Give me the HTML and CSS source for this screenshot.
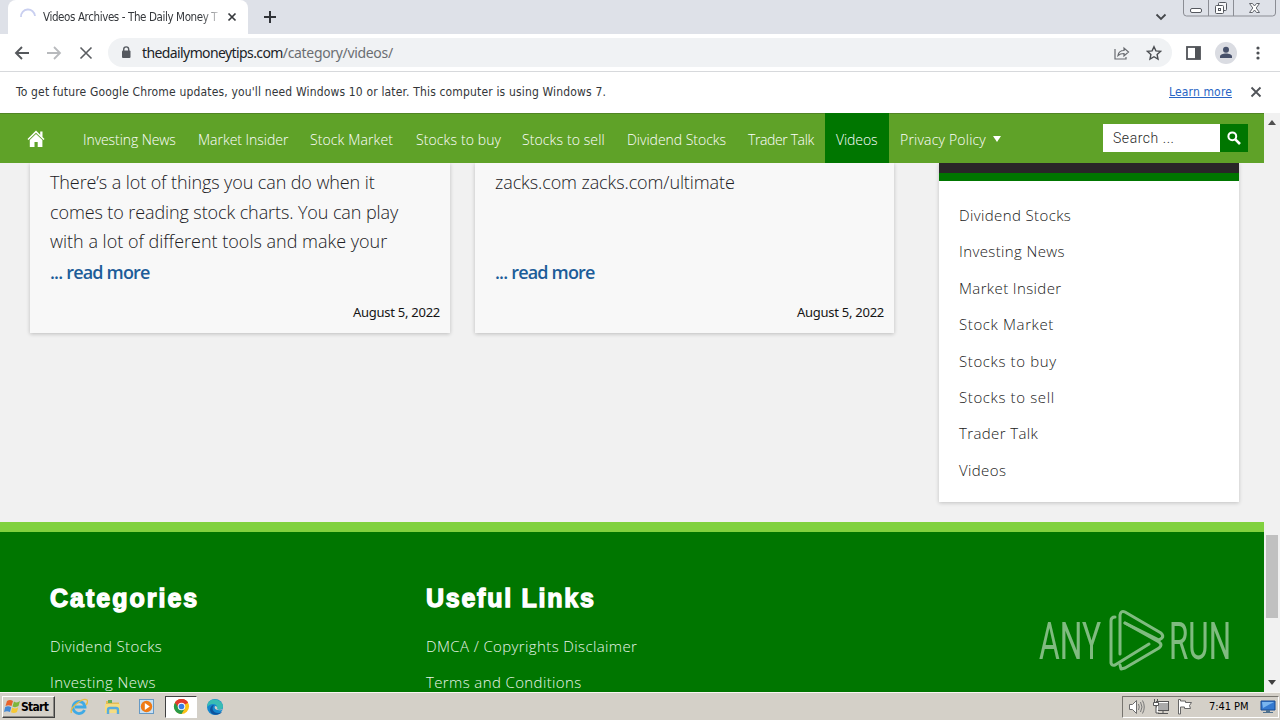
FILE: index.html
```html
<!DOCTYPE html>
<html lang="en">
<head>
<meta charset="utf-8">
<title>Videos Archives - The Daily Money Tips</title>
<link rel="stylesheet" href="styles.css">
</head>
<body>
<div class="screen">
  <header class="tabstrip">
    <div class="tab">
      <svg class="spinner" width="18" height="18" viewBox="0 0 18 18"><path d="M2 9a7 7 0 0 1 14-1" fill="none" stroke="#c9cff0" stroke-width="1.800"/></svg>
      <span class="tab-title">Videos Archives - The Daily Money T</span>
      <svg class="tab-close" width="10" height="10" viewBox="0 0 10 10"><path d="M1.500 1.500l7 7M8.500 1.500l-7 7" stroke="#36393d" stroke-width="1.700"/></svg>
    </div>
    <svg class="new-tab" width="12" height="12" viewBox="0 0 12 12"><path d="M6 0v12M0 6h12" stroke="#303338" stroke-width="2"/></svg>
    <svg class="tab-search" width="12" height="8" viewBox="0 0 12 8"><path d="M1.500 1.500L6 6l4.500-4.500" fill="none" stroke="#44474b" stroke-width="1.800"/></svg>
    <svg class="window-buttons" width="94" height="18" viewBox="0 0 94 18">
      <path d="M.5 0v13q0 3 3 3h86q3 0 3-3V0M25.500 0v16M50.500 0v16" fill="none" stroke="#8b8d94"/>
      <rect x="7.500" y="8.500" width="11" height="4" rx="1.500" fill="#fff" stroke="#55585f"/>
      <rect x="35.500" y="2.500" width="8" height="8" rx="1" fill="#f5f5f7" stroke="#55585f"/>
      <rect x="32.500" y="5.500" width="8" height="8" rx="1" fill="#fff" stroke="#55585f"/><rect x="35.500" y="8.500" width="2" height="2" fill="none" stroke="#55585f"/>
      <path d="M66.500 3.500h3l2 2.500 2-2.500h3l-3.300 4.500 3.300 4.500h-3l-2-2.500-2 2.500h-3l3.300-4.500z" fill="#fff" stroke="#62656c"/>
    </svg>
  </header>

  <div class="toolbar">
    <svg class="tool-icon" width="16" height="14" viewBox="0 0 16 14"><path d="M15 7H2M8 1L2 7l6 6" fill="none" stroke="#55585c" stroke-width="1.900"/></svg>
    <svg class="tool-icon" width="16" height="14" viewBox="0 0 16 14"><path d="M1 7h13M8 1l6 6-6 6" fill="none" stroke="#b8babd" stroke-width="1.800"/></svg>
    <svg class="tool-icon" width="16" height="14" viewBox="0 0 16 14"><path d="M2.500 1.500l11 11M13.500 1.500l-11 11" stroke="#5a5d61" stroke-width="1.600"/></svg>
    <div class="omnibox">
      <svg width="10" height="13" viewBox="0 0 10 13"><rect x="1" y="4.500" width="8.500" height="7.500" rx="1" fill="#55595f"/><path d="M2.700 5V3.400a2.500 2.500 0 0 1 5 0V5" fill="none" stroke="#55595f" stroke-width="1.400"/></svg>
      <span class="url"><span class="host">thedailymoneytips.com</span><span class="path">/category/videos/</span></span>
      <svg class="share" width="16" height="14" viewBox="0 0 16 14"><path d="M1 3v10h11v-2M4 9.500C4.500 6 7 4.500 10 4.500V2l4.500 4L10 10V7.500C7.500 7.500 5.500 8 4 9.500z" fill="none" stroke="#686b70" stroke-width="1.200"/></svg>
      <svg class="star" width="16" height="16" viewBox="0 0 16 16"><path d="M8 1.700l1.900 4.200 4.600.5-3.400 3.100.9 4.500-4-2.300L4 14l.9-4.500-3.400-3.100 4.600-.5z" fill="none" stroke="#4b4e52" stroke-width="1.400"/></svg>
    </div>
    <svg class="panel-icon" width="15" height="14" viewBox="0 0 15 14"><rect x="1" y="1" width="13" height="12" fill="none" stroke="#505358" stroke-width="1.800"/><path d="M9 1h5v12H9z" fill="#505358"/></svg>
    <svg class="avatar" width="22" height="22" viewBox="0 0 22 22"><circle cx="11" cy="11" r="11" fill="#dadce2"/><circle cx="11" cy="7.800" r="3" fill="#46506a"/><path d="M5 16v-1.500c0-4 12-4 12 0V16z" fill="#46506a"/></svg>
    <svg class="dots" width="4" height="14" viewBox="0 0 4 14"><g fill="#4d5054"><circle cx="2" cy="2" r="1.600"/><circle cx="2" cy="7" r="1.600"/><circle cx="2" cy="12" r="1.600"/></g></svg>
  </div>

  <div class="infobar">
    <span class="info-text">To get future Google Chrome updates, you'll need Windows 10 or later. This computer is using Windows 7.</span>
    <a class="info-link">Learn more</a>
    <svg width="12" height="12" viewBox="0 0 12 12"><path d="M1.500 1.500l9 9M10.500 1.500l-9 9" stroke="#505358" stroke-width="1.800"/></svg>
  </div>

  <div class="viewport">
    <div class="page">
      <nav class="nav">
        <a class="home"><svg width="18" height="18" viewBox="0 0 18 18"><path d="M9 .5L.5 9l1 1L9 2.700l7.500 7.300 1-1L15.500 7V1.500h-2.300v3.200z" fill="#fff"/><path d="M9 4L2.800 10v7H7.500v-5h3.200v5h4.700v-7z" fill="#fff"/></svg></a>
        <a>Investing News</a><a class="wide">Market Insider</a><a class="wider">Stock Market</a><a class="wider">Stocks to buy</a><a class="wider">Stocks to sell</a><a class="wide">Dividend Stocks</a><a class="tight">Trader Talk</a><a class="active">Videos</a>
        <a class="privacy">Privacy Policy <svg width="8" height="6" viewBox="0 0 8 6"><path d="M0 0h8L4 6z" fill="#fff"/></svg></a>
        <div class="search"><span class="field">Search ...</span><span class="search-button"><svg width="14" height="14" viewBox="0 0 14 14"><circle cx="5.300" cy="5.300" r="3.900" fill="none" stroke="#fff" stroke-width="2"/><path d="M8.300 8.300l4.700 4.700" stroke="#fff" stroke-width="2.600"/></svg></span></div>
      </nav>
      <main class="content">
        <article class="card">
          <p class="excerpt">There’s a lot of things you can do when it<br>comes to reading stock charts. You can play<br><span class="loose">with a lot of different tools and make your</span></p>
          <a class="more">... read more</a>
          <time class="date">August 5, 2022</time>
        </article>
        <article class="card">
          <p class="excerpt">zacks.com zacks.com/ultimate</p>
          <a class="more">... read more</a>
          <time class="date">August 5, 2022</time>
        </article>
        <aside class="sidebar">
          <ul class="links">
            <li>Dividend Stocks</li><li>Investing News</li><li>Market Insider</li><li class="spaced">Stock Market</li><li class="spaced">Stocks to buy</li><li class="spaced">Stocks to sell</li><li>Trader Talk</li><li>Videos</li>
          </ul>
        </aside>
      </main>
      <footer class="footer">
        <section><h2>Categories</h2><ul class="links"><li>Dividend Stocks</li><li>Investing News</li></ul></section>
        <section><h2 class="useful">Useful Links</h2><ul class="links"><li>DMCA / Copyrights Disclaimer</li><li>Terms and Conditions</li></ul></section>
      </footer>
    </div>
    <div class="scrollbar">
      <svg width="8" height="5" viewBox="0 0 8 5"><path d="M0 5l4-5 4 5z" fill="#505050"/></svg>
      <div class="thumb"></div>
      <svg class="down" width="8" height="5" viewBox="0 0 8 5"><path d="M0 0l4 5 4-5z" fill="#404040"/></svg>
    </div>
    <svg class="watermark" width="210" height="70" viewBox="0 0 210 70">
      <g fill="#fff" class="wm-text"><text x="1" y="51" textLength="62" lengthAdjust="spacingAndGlyphs">ANY</text><text x="131" y="51" textLength="62" lengthAdjust="spacingAndGlyphs">RUN</text></g>
      <g fill="none" stroke="#fff" stroke-width="3" stroke-linejoin="round" stroke-linecap="round">
        <path d="M82 46V7q1-5 5-3l36 21q3 3 1 5l-3 2L87 15"/>
        <path d="M77 9q-4 0-4 4v42q1 3 4 2l34-21"/>
        <path d="M82 57l1 4 4-1 34-20q4-3 0-6L87 15"/>
      </g>
    </svg>
  </div>

  <div class="taskbar">
    <div class="start"><svg width="17" height="16" viewBox="0 0 17 16"><path d="M3 2q3-2 6 0L7.500 7q-3-1.500-6 0z" fill="#e8622b"/><path d="M10 2.500q3 2 6-.500L14.500 7q-3 2-6 .5z" fill="#7eb63c"/><path d="M1.200 8q3-1.500 6 .2L6 13q-3-1.500-6 0z" fill="#4389d5"/><path d="M8.200 8.500q3 2 6-.3L13 13q-3 2-6 .3z" fill="#f6c834"/></svg><span>Start</span></div>
    <div class="launchers">
      <span><svg width="18" height="18" viewBox="0 0 18 18"><path d="M14.500 12A6 6 0 1 1 15 9H5" fill="none" stroke="#3faae5" stroke-width="2.800"/><path d="M1.500 15C-1 10 13-1 17 2c1 1 .5 3-1 5" fill="none" stroke="#e8bc46" stroke-width="1.400"/></svg></span>
      <span><svg width="18" height="18" viewBox="0 0 18 18"><path d="M2 3h5l1 1.500h7V15H2z" fill="#e4bd54"/><path d="M4 2h4v3H4z" fill="#65ae57"/><path d="M1 6h15v9H1z" fill="#f5dc82"/><path d="M4 16v-4q0-2 2-2h6q2 0 2 2v4" fill="none" stroke="#58acdd" stroke-width="2.400"/></svg></span>
      <span><svg width="18" height="18" viewBox="0 0 18 18"><rect x="1.500" y="1.500" width="14" height="14" fill="#c8e1f5" stroke="#6699c4"/><circle cx="8.500" cy="8.500" r="5.700" fill="#ef7b16"/><path d="M6.800 5v7l5-3.500z" fill="#fff"/></svg></span>
      <span class="pressed"><svg width="17" height="17" viewBox="0 0 18 18"><circle cx="9" cy="9" r="8" fill="#fbc116"/><path d="M9 9L2.070 5A8 8 0 0 1 15.930 5z" fill="#e33b2e"/><path d="M9 9L2.070 5A8 8 0 0 0 9 17l3.500-6z" fill="#299a48"/><path d="M9 5h6.930A8 8 0 0 0 2.070 5L6 10z" fill="#e33b2e"/><circle cx="9" cy="9" r="4" fill="#fff"/><circle cx="9" cy="9" r="3" fill="#397de4"/></svg></span>
      <span><svg width="18" height="18" viewBox="0 0 18 18"><circle cx="9" cy="9" r="8" fill="#1587ce"/><path d="M2 5c3-6 14-4 15 3 0 4-4 4-6 3 1-3-1-5-4-5-2 0-4 1-6 3z" fill="#38bcb4"/><path d="M8 7c-3 3-1 8 4 8 2 0 3-.5 4-1-3 4-11 4-12-2 0-3 2-5 4-5z" fill="#0e539d"/><path d="M9 8c-1 2 0 5 7 4l1-1c-2 1-5 1-6 0 1-1 0-3-2-3z" fill="#d4d0c8"/></svg></span>
    </div>
    <div class="tray">
      <svg width="18" height="18" viewBox="0 0 18 18"><path d="M1.500 6.500h3l4-4v13l-4-4h-3z" fill="#fff" stroke="#6d6d6d"/><path d="M10.500 6q1.500 3 0 6M12.500 4q3 5 0 10M14.500 2.500q3.500 6.500 0 13" fill="none" stroke="#777"/></svg>
      <svg width="18" height="18" viewBox="0 0 18 18"><rect x="5.500" y="4.500" width="11" height="8" fill="#aaa" stroke="#fff"/><rect x="4.500" y="3.500" width="12" height="9" fill="none" stroke="#555"/><path d="M6 15.500h10M11 13v2" stroke="#555"/><path d="M2.500 1v3M5.500 1v3M1.500 4.500h5v3h-5zM4 8v7h3" fill="#fff" stroke="#555"/></svg>
      <svg width="18" height="18" viewBox="0 0 18 18"><path d="M2.500 16V1.500h2V3h5v1.500h6l-2 3 1 3h-6V9h-4v7z" fill="#fff" stroke="#666"/></svg>
      <span class="clock">7:41 PM</span>
      <svg class="desktop" width="18" height="16" viewBox="0 0 18 16"><path d="M2 2h14v9H2z" fill="#3479d0" stroke="#174a91"/><path d="M3 3h12L4 9z" fill="#79b5ef"/><path d="M7 11h4v2h3v1H4v-1h3z" fill="#4f718f"/></svg>
    </div>
  </div>
</div>
</body>
</html>
```
FILE: styles.css
```css
* { box-sizing: border-box; }
body { margin: 0; background: #fff; font-family: "Open Sans", "Noto Sans", sans-serif; }
svg { display: block; flex: none; }
ul, h2, p { margin: 0; padding: 0; list-style: none; }
.screen { width: 1280px; height: 720px; display: flex; flex-direction: column; overflow: hidden; white-space: nowrap; }

.tabstrip { height: 34px; flex: none; display: flex; background: #dee1e8; padding-left: 8px; }
.tab { width: 240px; background: #fff; border-radius: 8px 8px 0 0; display: flex; align-items: center; padding: 0 11px; }
.tab-title { width: 176px; margin-left: 6px; font: 11.500px/18px "DejaVu Sans Condensed", sans-serif; letter-spacing: -0.390px; color: #34373b; mask-image: linear-gradient(90deg, #000 90%, rgba(0,0,0,.2)); }
.tab-close { margin-left: 8px; }
.new-tab { margin: 11px 0 0 16px; }
.tab-search { margin: 13px 16px 0 auto; }
.window-buttons { margin-right: 3px; }

.toolbar { height: 38px; flex: none; display: flex; align-items: center; background: #fff; border-bottom: 1px solid #d7d9dc; padding-left: 14px; }
.tool-icon { margin-right: 16px; }
.omnibox { width: 1064px; height: 29px; margin-left: -2px; border-radius: 15px; background: #f0f2f4; display: flex; align-items: center; padding: 0 10px 0 13px; }
.url { margin-left: 11px; font: 14px/20px "Noto Sans", sans-serif; }
.host { color: #202327; letter-spacing: -0.600px; }
.path { color: #6b6e72; letter-spacing: -0.330px; }
.share { margin-left: auto; margin-right: 16px; }
.panel-icon { margin-left: 14px; }
.avatar { margin-left: 14px; }
.dots { margin-left: 19px; }

.infobar { height: 41px; flex: none; display: flex; align-items: center; padding: 0 18px 2px 16px; font: 12px/18px "DejaVu Sans Condensed", sans-serif; color: #333639; }
.info-text { letter-spacing: .160px; }
.info-link { margin-left: auto; margin-right: 18px; color: #2865c5; text-decoration: underline; letter-spacing: .150px; }

.viewport { position: relative; height: 579px; flex: none; display: flex; overflow: hidden; }
.page { width: 1264px; background: #f1f1f1; display: flex; flex-direction: column; }
.nav { height: 50px; flex: none; background: #5fa228; border-top: 1px solid #518525; color: #fff; display: grid; grid-template-columns: 72px 115px 112px 106px 106px 105px 121px 88px 64px 1fr 161px; font-size: 14px; font-weight: 300; letter-spacing: -0.080px; }
.nav > a { display: flex; align-items: center; padding: 1px 0 0 11px; }
.nav > a.home { padding-left: 27px; }
.nav > a.active { background: #007600; margin-top: -1px; padding-top: 2px; }
.nav > .wide { letter-spacing: -0.020px; }
.nav > .wider { letter-spacing: .110px; }
.nav > .tight { letter-spacing: -0.380px; }
.nav > .privacy { letter-spacing: .200px; }
.privacy svg { margin-left: 7px; }
.search { width: 145px; height: 28px; margin-top: 10px; display: flex; }
.field { flex: 1; background: #fff; color: #292929; padding-left: 10px; font: 300 14px/28px Roboto, sans-serif; letter-spacing: .550px; }
.search-button { width: 28px; background: #007600; display: flex; align-items: center; justify-content: center; }

.content { height: 359px; flex: none; display: grid; grid-template-columns: 420px 419px 300px; column-gap: 25px; align-items: start; padding-left: 30px; }
.card { height: 170px; background: #f8f8f8; box-shadow: 0 1px 4px rgba(0,0,0,.22); clip-path: inset(0 -8px -8px -8px); padding: 5px 10px 0 20px; display: flex; flex-direction: column; }
.excerpt { height: 90px; font-size: 18px; line-height: 29.500px; font-weight: 300; color: #202024; letter-spacing: -0.100px; }
.loose { letter-spacing: 0; }
.more { font: 600 18px/29px "Open Sans", sans-serif; color: #1d5d99; letter-spacing: -0.820px; }
.date { margin-top: 14px; text-align: right; font: 13px/22px "Noto Sans", sans-serif; color: #151515; letter-spacing: -0.270px; }
.sidebar { width: 300px; height: 339px; margin-left: 20px; background: #fff; border-top: 10px solid #292728; box-shadow: 0 1px 4px rgba(0,0,0,.2); clip-path: inset(0 -8px -8px -8px); }
.sidebar .links { border-top: 8px solid #007600; padding: 16px 20px 0; }
.links { font-size: 15px; line-height: 36.400px; font-weight: 300; color: #202020; letter-spacing: .380px; }
.links .spaced { letter-spacing: .620px; }

.footer { flex: 1; background: #007600; border-top: 10px solid #80d13e; color: #fff; display: grid; grid-template-columns: 376px 1fr; padding: 47px 50px 0; }
.footer h2 { font: bold 25px/38px "Liberation Sans", sans-serif; -webkit-text-stroke: 1.300px #fff; letter-spacing: 2px; }
.footer .useful { letter-spacing: 1.750px; }
.footer .links { color: #e9f5e9; padding-top: 11px; }

.scrollbar { width: 16px; background: #f1f1f1; display: flex; flex-direction: column; align-items: center; padding: 7px 0; }
.thumb { width: 12px; height: 83px; background: #c0c0c0; margin-top: 410px; }
.down { margin-top: auto; }
.watermark { position: absolute; left: 1038px; top: 495px; opacity: .5; overflow: visible; }
.wm-text { font: 400 51px Roboto, sans-serif; }

.taskbar { height: 28px; flex: none; display: flex; align-items: center; background: #d4d0c8; border-top: 1px solid #f7f6f2; }
.start { width: 53px; height: 22px; margin-left: 2px; border: 1px solid; border-color: #fff #404040 #404040 #fff; box-shadow: inset -1px -1px #8b8985; display: flex; align-items: center; font: bold 12px "DejaVu Sans Condensed", sans-serif; letter-spacing: -0.700px; color: #000; }
.start svg { margin-left: 1px; }
.launchers { display: flex; margin-left: 8px; gap: 2px; }
.launchers span { width: 32px; height: 22px; display: flex; align-items: center; justify-content: center; }
.launchers .pressed { background: #fff; border: 1px solid; border-color: #404040 #fff #fff #404040; }
.tray { width: 157px; height: 22px; margin-left: auto; margin-right: 1px; border: 1px solid; border-color: #77746e #fff #fff #77746e; display: flex; align-items: center; gap: 6px; padding-left: 5px; }
.clock { margin-left: 9px; font: 11px "DejaVu Sans Condensed", sans-serif; color: #000; letter-spacing: -0.050px; }
.desktop { margin-left: auto; margin-right: 1px; }
```
